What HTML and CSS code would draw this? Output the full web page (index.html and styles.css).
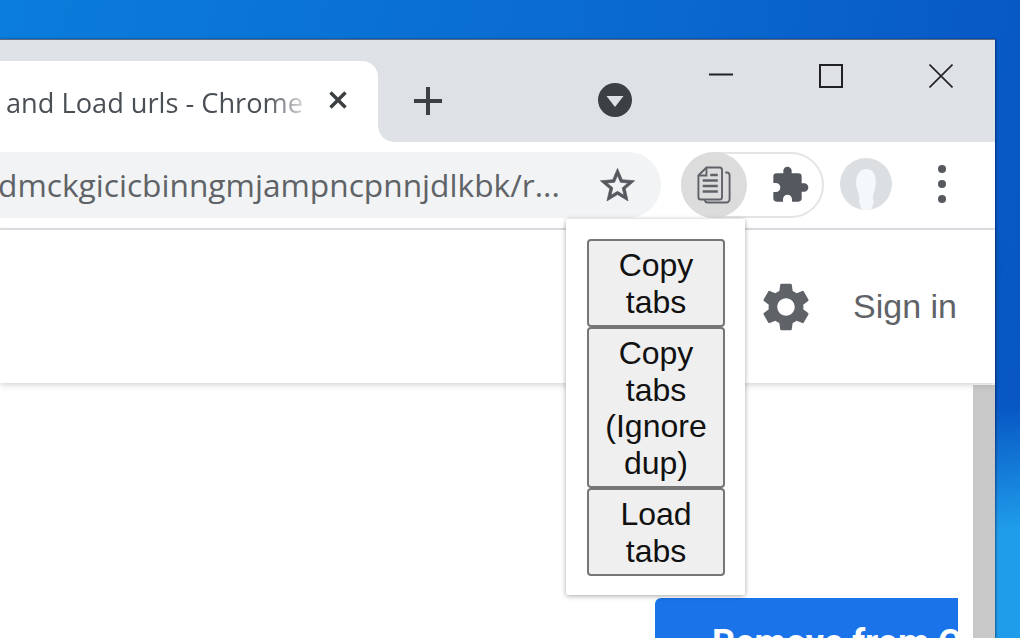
FILE: index.html
```html
<!DOCTYPE html>
<html lang="en">
<head>
<meta charset="utf-8">
<title>Copy and Load urls</title>
<link rel="stylesheet" href="styles.css">
</head>
<body>
<div class="window">
  <div class="tabstrip">
    <div class="tab">
      <span class="tab-title">and Load urls - Chrome</span>
      <svg class="tab-close" viewBox="0 0 20 20"><path d="M2.500 2.500l15 15M17.500 2.500l-15 15"/></svg>
    </div>
    <svg class="new-tab" viewBox="0 0 30 30"><path d="M15 1v28M1 15h28"/></svg>
    <svg class="tab-search" viewBox="0 0 34 34"><circle cx="17" cy="17" r="17"/><path d="M8.500 13h17L17 24z"/></svg>
    <div class="win-controls">
      <svg class="win-btn" viewBox="0 0 24 24"><path d="M0 10.500h24"/></svg>
      <svg class="win-btn" viewBox="0 0 24 24"><path d="M1 1h22v22H1z"/></svg>
      <svg class="win-btn win-x" viewBox="0 0 24 24"><path d="M.5.5l23 23M23.500.5l-23 23"/></svg>
    </div>
  </div>
  <div class="toolbar">
    <div class="omnibox">
      <span class="url">dmckgicicbinngmjampncpnnjdlkbk/r...</span>
      <svg class="star" viewBox="0 0 24 24"><path d="M22 9.240l-7.190-.620L12 2 9.190 8.630 2 9.240l5.460 4.730L5.820 21 12 17.270 18.180 21l-1.630-7.030L22 9.240zM12 15.400l-3.760 2.270 1-4.280-3.320-2.880 4.380-.380L12 6.100l1.710 4.040 4.380.380-3.320 2.880 1 4.280L12 15.400z"/></svg>
    </div>
    <div class="ext-pill">
      <div class="ext-active">
        <svg class="copy-icon" viewBox="0 0 36 38" preserveAspectRatio="none">
          <path d="M10 1.500h14a2.500 2.500 0 0 1 2.500 2.500v27a2.500 2.500 0 0 1-2.500 2.500H4A2.500 2.500 0 0 1 1.500 31V9.500z"/>
          <path d="M10 1.500v8H1.500"/>
          <path d="M30 6.500h1.500a3 3 0 0 1 3 3V33a3.500 3.500 0 0 1-3.500 3.500H11a3.500 3.500 0 0 1-3-2.500"/>
          <path class="copy-lines" d="M14 9h8M6 14.500h16M6 20h16M6 25.500h16"/>
        </svg>
      </div>
      <svg class="puzzle" viewBox="0 0 24 24"><path d="M20.500 11H19V7a2 2 0 0 0-2-2h-4V3.500a2.500 2.500 0 0 0-5 0V5H4a2 2 0 0 0-2 2v3.800h1.500c1.490 0 2.700 1.210 2.700 2.700s-1.210 2.700-2.700 2.700H2V20a2 2 0 0 0 2 2h3.800v-1.500c0-1.490 1.210-2.700 2.700-2.700s2.700 1.210 2.700 2.700V22H17a2 2 0 0 0 2-2v-4h1.500a2.500 2.500 0 0 0 0-5z"/></svg>
    </div>
    <div class="avatar">
      <svg viewBox="0 0 52 52"><path class="avatar-face" d="M19 44c1-4 0-7-2-13-2-8-1-19 9-20 10 0 11 11 9 20-2 6-3 9-1 13l-3 8h-9z"/></svg>
    </div>
    <div class="menu-dots"><i></i><i></i><i></i></div>
  </div>
  <div class="header">
    <svg class="gear" viewBox="0 0 24 24"><path d="M19.140 12.940c.040-.300.060-.610.060-.940 0-.320-.020-.640-.070-.940l2.030-1.580a.490.490 0 0 0 .120-.610l-1.920-3.320a.488.488 0 0 0-.590-.220l-2.390.960c-.500-.380-1.030-.700-1.620-.940l-.360-2.540a.484.484 0 0 0-.480-.410h-3.840c-.240 0-.430.170-.470.410l-.360 2.540c-.590.240-1.130.570-1.620.940l-2.390-.960c-.220-.080-.470 0-.590.220L2.740 8.870c-.120.210-.080.470.120.610l2.030 1.580c-.050.300-.090.630-.090.940s.020.640.070.940l-2.030 1.580a.490.490 0 0 0-.120.610l1.920 3.320c.120.220.370.290.590.220l2.390-.960c.500.380 1.030.700 1.620.940l.360 2.540c.050.240.240.410.480.410h3.840c.240 0 .440-.170.470-.410l.360-2.540c.590-.240 1.130-.560 1.620-.940l2.390.960c.220.080.470 0 .590-.220l1.920-3.320c.120-.220.070-.470-.120-.610l-2.010-1.580zM12 15.600c-1.980 0-3.600-1.620-3.600-3.600s1.620-3.600 3.600-3.600 3.600 1.620 3.600 3.600-1.620 3.600-3.600 3.600z"/></svg>
    <span class="sign-in">Sign in</span>
  </div>
  <div class="content">
    <div class="page">
      <div class="remove-btn">Remove from Chrome</div>
    </div>
    <div class="scrollbar"></div>
  </div>
  <div class="popup">
    <button class="popup-btn">Copy tabs</button>
    <button class="popup-btn">Copy tabs (Ignore dup)</button>
    <button class="popup-btn">Load tabs</button>
  </div>
</div>
</body>
</html>
```
FILE: styles.css
```css
* { box-sizing: border-box; }
html, body { margin: 0; height: 100%; }
body {
  width: 1020px;
  height: 638px;
  overflow: hidden;
  position: relative;
  font-family: "Liberation Sans", Arial, sans-serif;
  background:
    linear-gradient(172deg, rgba(30,170,245,0) 70%, #1f9dea 86%),
    linear-gradient(100deg, #0b7ddc 0%, #0a68cf 60%, #0754c2 100%);
}
.window {
  position: absolute;
  left: 0;
  top: 39px;
  width: 995px;
  height: 599px;
  border-top: 1px solid #5d6b7c;
  display: flex;
  flex-direction: column;
  background: #fff;
  box-shadow: 1px 0 2px rgba(0,0,40,.45);
}
.tabstrip {
  height: 102px;
  flex: none;
  background: #dee1e6;
  padding-top: 21px;
  display: flex;
  align-items: flex-start;
}
.tab {
  width: 378px;
  height: 81px;
  flex: none;
  background: #fff;
  border-radius: 0 16px 0 0;
  display: flex;
  align-items: center;
  padding-left: 6px;
  position: relative;
}
.tab::after {
  content: "";
  position: absolute;
  right: -16px;
  bottom: 0;
  width: 16px;
  height: 16px;
  background: radial-gradient(circle at 100% 0, #dee1e6 15.500px, #fff 16px);
}
.tab-title {
  width: 296px;
  flex: none;
  font-family: "Open Sans", sans-serif;
  font-size: 27.200px;
  line-height: 40px;
  margin-top: 3px;
  white-space: nowrap;
  overflow: hidden;
  color: #4a4f55;
  -webkit-mask-image: linear-gradient(90deg, #000 88%, rgba(0,0,0,.25) 100%);
  mask-image: linear-gradient(90deg, #000 88%, rgba(0,0,0,.25) 100%);
}
.tab-close {
  width: 20px;
  height: 20px;
  margin-left: 26px;
  margin-top: -3px;
  fill: none;
  stroke: #3c4043;
  stroke-width: 3.500;
}
.new-tab {
  width: 30px;
  height: 30px;
  margin: 25px 0 0 35px;
  fill: none;
  stroke: #3c4043;
  stroke-width: 4;
}
.tab-search {
  width: 34px;
  height: 34px;
  margin: 22px 0 0 155px;
  fill: #3c4043;
}
.tab-search path { fill: #dee1e6; }
.win-controls {
  display: flex;
  gap: 86px;
  margin: 3px 0 0 77px;
}
.win-btn {
  width: 24px;
  height: 24px;
  fill: none;
  stroke: #1f2124;
  stroke-width: 2;
}
.win-x { stroke-width: 1.600; }
.toolbar {
  height: 88px;
  flex: none;
  display: flex;
  align-items: flex-start;
  padding-top: 10px;
  background: #fff;
  border-bottom: 2px solid #dfe1e5;
}
.omnibox {
  width: 661px;
  height: 66px;
  flex: none;
  background: #f1f3f4;
  border-radius: 0 33px 33px 0;
  display: flex;
  align-items: center;
}
.url {
  width: 580px;
  margin-left: -2px;
  flex: none;
  font-family: "Open Sans", sans-serif;
  font-size: 31.700px;
  line-height: 44px;
  white-space: nowrap;
  overflow: hidden;
  color: #5f6368;
}
.star {
  width: 41px;
  height: 41px;
  margin-left: 19px;
  fill: #55585d;
  stroke: #55585d;
  stroke-width: .4;
}
.ext-pill {
  width: 143px;
  height: 66px;
  flex: none;
  margin-left: 20px;
  border: 2px solid #e3e4e6;
  border-radius: 33px;
  display: flex;
  align-items: center;
}
.ext-active {
  width: 66px;
  height: 66px;
  flex: none;
  margin-left: -2px;
  border-radius: 50%;
  background: #dcdcdc;
  display: flex;
  align-items: center;
  justify-content: center;
}
.copy-icon {
  width: 34px;
  height: 38px;
  fill: none;
  stroke: #5f6368;
  stroke-width: 2;
}
.copy-lines { stroke-width: 2.500; }
.puzzle {
  width: 40px;
  height: 40px;
  margin-left: 23px;
  fill: #55585f;
}
.avatar {
  width: 52px;
  height: 52px;
  flex: none;
  margin: 6px 0 0 16px;
  border-radius: 50%;
  overflow: hidden;
  background: #dcdfe2;
}
.avatar svg { display: block; width: 52px; height: 52px; }
.avatar-face { fill: #f5f8fb; }
.menu-dots {
  margin: 13px 0 0 46px;
  display: flex;
  flex-direction: column;
  gap: 7px;
}
.menu-dots i {
  display: block;
  width: 8px;
  height: 8px;
  border-radius: 50%;
  background: #55585d;
}
.header {
  height: 153px;
  flex: none;
  background: #fff;
  display: flex;
  align-items: center;
  justify-content: flex-end;
  padding: 0 38px 0 0;
  box-shadow: 0 2px 6px rgba(60,64,67,.22);
  position: relative;
}
.gear {
  width: 58px;
  height: 58px;
  fill: #5f6368;
}
.sign-in {
  margin-left: 38px;
  font-family: "Liberation Sans", Arial, sans-serif;
  font-size: 34px;
  color: #5f6368;
}
.content {
  flex: 1;
  min-height: 0;
  display: flex;
  overflow: hidden;
}
.page {
  flex: 1;
  padding: 215px 15px 0 0;
  display: flex;
  justify-content: flex-end;
  align-items: flex-start;
}
.remove-btn {
  width: 303px;
  height: 60px;
  flex: none;
  overflow: hidden;
  white-space: nowrap;
  background: #1a73e8;
  border-radius: 6px 0 0 0;
  padding: 27px 0 0 57px;
  color: #fff;
  font-family: "Roboto", sans-serif;
  font-size: 36px;
  font-weight: 700;
  line-height: 36px;
}
.scrollbar {
  width: 22px;
  flex: none;
  margin-top: 2px;
  background: #c8c8c8;
}
.popup {
  position: absolute;
  left: 566px;
  top: 179px;
  width: 179px;
  height: 376px;
  background: #fff;
  border-radius: 2px;
  box-shadow: 0 1px 5px rgba(0,0,0,.35);
  padding: 20px 20px 0 21px;
  display: flex;
  flex-direction: column;
}
.popup-btn {
  display: block;
  width: 138px;
  flex: none;
  padding: 6px 12px 5px;
  margin: 0;
  background: #efefef;
  border: 2px solid #767676;
  border-radius: 4px;
  font-family: "Liberation Sans", Arial, sans-serif;
  font-size: 32px;
  line-height: 36.500px;
  color: #111;
  text-align: center;
}
```
